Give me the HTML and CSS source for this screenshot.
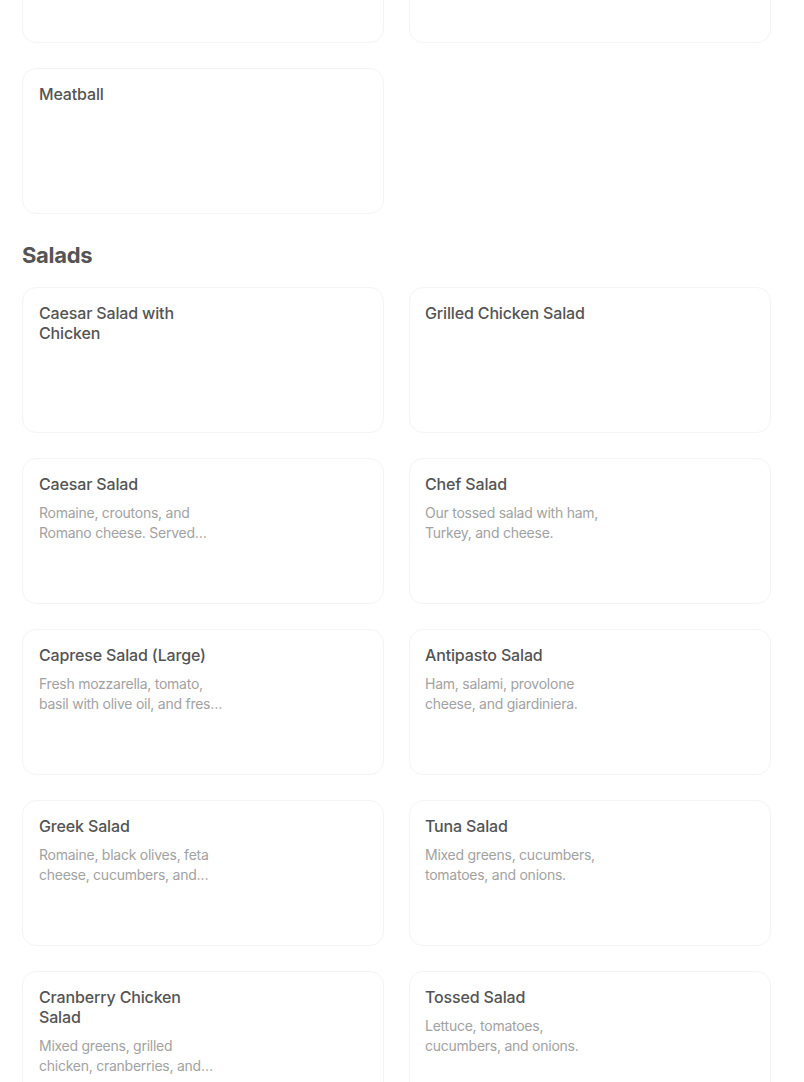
FILE: index.html
```html
<!DOCTYPE html>
<html>
<head>
<meta charset="utf-8">
<link rel="stylesheet" href="styles.css">
</head>
<body>
<div class="page">
  <div class="grid">
    <div class="card"><div class="info"></div></div>
    <div class="card"><div class="info"></div></div>
    <div class="card"><div class="info"><div class="title">Meatball</div></div></div>
  </div>
  <h2 class="section">Salads</h2>
  <div class="grid">
    <div class="card"><div class="info"><div class="title">Caesar Salad with Chicken</div></div></div>
    <div class="card"><div class="info"><div class="title">Grilled Chicken Salad</div></div></div>
    <div class="card"><div class="info"><div class="title">Caesar Salad</div><div class="desc">Romaine, croutons, and Romano cheese. Served with Caesar dressing.</div></div></div>
    <div class="card"><div class="info"><div class="title">Chef Salad</div><div class="desc">Our tossed salad with ham, Turkey, and cheese.</div></div></div>
    <div class="card"><div class="info"><div class="title">Caprese Salad (Large)</div><div class="desc">Fresh mozzarella, tomato, basil with olive oil, and fresh balsamic.</div></div></div>
    <div class="card"><div class="info"><div class="title">Antipasto Salad</div><div class="desc">Ham, salami, provolone cheese, and giardiniera.</div></div></div>
    <div class="card"><div class="info"><div class="title">Greek Salad</div><div class="desc">Romaine, black olives, feta cheese, cucumbers, and tomatoes.</div></div></div>
    <div class="card"><div class="info"><div class="title">Tuna Salad</div><div class="desc">Mixed greens, cucumbers, tomatoes, and onions.</div></div></div>
    <div class="card"><div class="info"><div class="title">Cranberry Chicken Salad</div><div class="desc">Mixed greens, grilled chicken, cranberries, and walnuts.</div></div></div>
    <div class="card"><div class="info"><div class="title">Tossed Salad</div><div class="desc">Lettuce, tomatoes, cucumbers, and onions.</div></div></div>
  </div>
</div>
</body>
</html>
```
FILE: styles.css
```css
* { box-sizing: border-box; }
html, body { margin: 0; padding: 0; background: #fff; }
body { font-family: Inter, "Noto Sans", sans-serif; color: #545454; overflow: hidden; }
.page { padding: 0 0 0 22px; margin-top: -103px; }
.grid { display: grid; grid-template-columns: 362px 362px; column-gap: 25px; row-gap: 25px; }
.card { height: 146px; border: 1px solid #f4f4f4; border-radius: 14px; padding: 16px 16px 16px 16px; background: #fff; }
.grid .card:nth-child(even) { padding-left: 15px; }
.info { width: 186px; }
.title { font-size: 16px; line-height: 20px; font-weight: 500; color: #545454; letter-spacing: -0.15px; margin-top: -1px; }
.desc { margin-top: 9px; font-size: 14px; line-height: 20px; color: #a2a2a2; display: -webkit-box; -webkit-line-clamp: 2; -webkit-box-orient: vertical; overflow: hidden; letter-spacing: -0.25px; }
.section { margin: 25px 0 16px; font-size: 22px; line-height: 32px; font-weight: 700; color: #545454; letter-spacing: -0.3px; }
```
